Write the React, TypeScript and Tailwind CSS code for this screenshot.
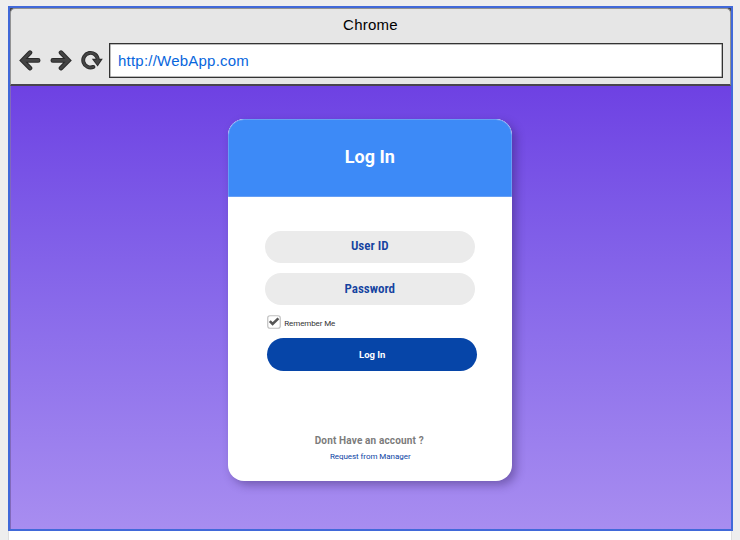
import type { ReactNode } from "react";

function Arrow({ flip = false }: { flip?: boolean }) {
  return (
    <svg width="22" height="22" viewBox="0 0 22 22" className={flip ? "-scale-x-100" : ""}>
      <path d="M11 2.6 3.4 10.4 11 18.2M4 10.4h15.2" fill="none" stroke="#2b2b2b" strokeWidth="4.6" strokeLinecap="round" strokeLinejoin="miter" />
      <path d="M11 2.6 3.4 10.4 11 18.2M4 10.4h15.2" fill="none" stroke="#444444" strokeWidth="2.6" strokeLinecap="round" />
    </svg>
  );
}

function Reload() {
  return (
    <svg width="22" height="22" viewBox="0 0 22 22">
      <path d="M12.4 16.9A7.3 7.3 0 1 1 16.8 9.6" fill="none" stroke="#2b2b2b" strokeWidth="3.9" strokeLinecap="round" />
      <path d="M10.8 8.8h11l-5.2 7.8z" fill="#2b2b2b" />
      <path d="M12.4 16.9A7.3 7.3 0 1 1 16.8 10" fill="none" stroke="#444444" strokeWidth="2.1" strokeLinecap="round" />
      <path d="M12.7 9.8h7.2l-3.4 5.1z" fill="#444444" />
    </svg>
  );
}

function Field({ children }: { children: ReactNode }) {
  return (
    <div className="ml-[36.5px] flex h-[32px] w-[210px] items-center justify-center rounded-full bg-[#ebebeb] pb-[2px] font-['Roboto_Condensed',Roboto,sans-serif] text-[13px] leading-none font-semibold text-[#1442a0]">
      {children}
    </div>
  );
}

export default function App() {
  return (
    <div className="h-[540px] w-[740px] overflow-hidden bg-[#eeeeee] pt-[6px] pl-[8px] font-[Roboto,sans-serif]">
      <div className="flex h-[534px] w-[724px] flex-col border-x border-[#dedede] bg-white">
        <div className="-ml-px flex h-[525px] w-[725px] shrink-0 flex-col border-2 border-[#4169d9] bg-[#44444c]">
          <div className="flex h-[78px] shrink-0 flex-col rounded-t-[5px] border border-b-2 border-[#929292] border-b-[#48444e] bg-[#e6e6e6]">
            <div className="flex h-[34px] items-center justify-center pb-[4px] font-['Liberation_Sans',Arial,sans-serif] text-[15px] leading-none tracking-[0.25px] text-black">Chrome</div>
            <div className="flex items-center">
              <div className="flex w-[98px] gap-[9px] pl-[8px]">
                <Arrow />
                <Arrow flip />
                <Reload />
              </div>
              <div className="flex h-[35px] w-[614px] items-center border-[1.5px] border-[#333333] bg-white pl-[8px] font-['Liberation_Sans',Arial,sans-serif] text-[15px] leading-none tracking-[0.22px] text-[#0866dd] shadow-[inset_0_0_0_0.5px_#777777]">http://WebApp.com</div>
            </div>
          </div>
          <div className="flex h-[443px] justify-center border-l border-[#8169bb] bg-linear-to-b from-[#6e41e3] to-[#a88df0] pt-[33px]">
            <div className="mr-[1.5px] flex h-[361.5px] w-[284px] flex-col overflow-hidden rounded-[16px] bg-white shadow-[4px_4px_10px_rgba(40,20,80,0.38)]">
              <div className="flex h-[78px] shrink-0 items-center justify-center rounded-t-[16px] border border-[#669ff5] bg-[#3d8af7] pr-[1px] pb-[2px] text-[18px] leading-none font-bold text-white">Log In</div>
              <div className="flex flex-col pt-[33.5px]">
                <Field>User ID</Field>
                <div className="h-[10.5px]" />
                <Field>Password</Field>
                <div className="mt-[10px] ml-[39px] flex h-[14px] items-center gap-[3px] text-[8px] leading-none text-[#333333]">
                  <svg width="14" height="14" viewBox="0 0 14 14">
                    <rect x=".75" y=".75" width="12.5" height="12.5" rx="2.2" fill="#fff" stroke="#c0c0c0" strokeWidth="1.2" />
                    <path d="m2.8 6.2 2.8 2.8 5.8-5.6" fill="none" stroke="#565656" strokeWidth="2.6" />
                  </svg>
                  <span className="pt-[3px] tracking-[-0.1px]">Remember Me</span>
                </div>
                <div className="mt-[9px] ml-[39px] flex h-[32.5px] w-[210px] items-center justify-center rounded-full bg-[#0645a8] text-[9.5px] leading-none font-bold text-white">Log In</div>
                <div className="mt-[65px] flex flex-col items-center pr-[2px] leading-none">
                  <div className="text-[10px] font-bold tracking-[0.15px] text-[#7b7b7b]">Dont Have an account ?</div>
                  <div className="mt-[7px] pl-[2px] text-[8px] tracking-[-0.05px] text-[#0b43a4]">Request from Manager</div>
                </div>
              </div>
            </div>
          </div>
        </div>
      </div>
    </div>
  );
}
